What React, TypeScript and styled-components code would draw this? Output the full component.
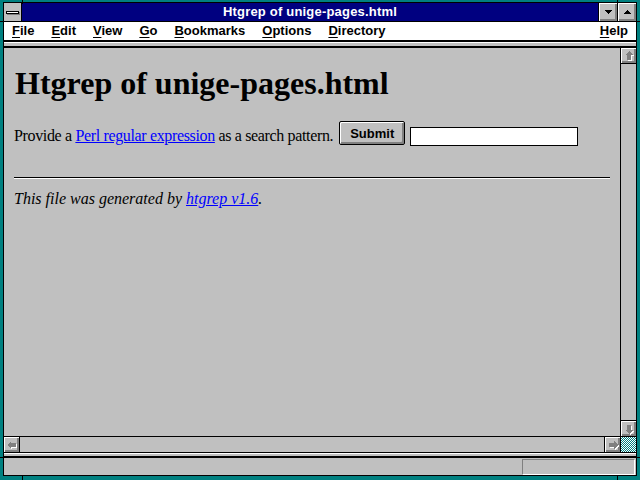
import React from "react";
import styled, { createGlobalStyle } from "styled-components";

const Global = createGlobalStyle`
  html, body { margin: 0; padding: 0; width: 640px; height: 480px; overflow: hidden; background: #008080; }
  #root { width: 640px; height: 480px; }
  * { box-sizing: border-box; }
`;

const Frame = styled.div`
  position: relative;
  width: 640px;
  height: 480px;
  background: #008080;
  padding: 2px 3px 4px 3px;
`;

const Tick = styled.div<{ $v?: boolean }>`
  position: absolute;
  background: #000;
  ${(p) => (p.$v ? "width: 1px; height: 4px;" : "width: 4px; height: 1px;")}
`;

const Inner = styled.div`
  width: 100%;
  height: 100%;
  border: 1px solid #000;
  background: #c0c0c0;
  display: flex;
  flex-direction: column;
`;

const TitleBar = styled.div`
  height: 19px;
  flex: none;
  display: flex;
  background: #000080;
  border-bottom: 1px solid #000;
`;

const SysBox = styled.div`
  width: 18px;
  flex: none;
  background: #c0c0c0;
  border-right: 1px solid #000;
  display: flex;
  align-items: center;
  justify-content: center;
`;

const SysBar = styled.div`
  width: 13px;
  height: 3px;
  background: #fff;
  border: 1px solid #000;
  box-shadow: 1px 1px 0 #808080;
  margin-right: 1px;
`;

const Title = styled.div`
  flex: 1;
  text-align: center;
  color: #fff;
  font: bold 13px/18px "Liberation Sans", Arial, sans-serif;
  letter-spacing: 0.2px;
`;

const TitleButton = styled.div`
  width: 19px;
  flex: none;
  border-left: 1px solid #000;
  background: #c0c0c0;
  box-shadow: inset 1px 1px #fff, inset -2px -2px #808080;
  display: flex;
  align-items: center;
  justify-content: center;
`;

const MenuBar = styled.div`
  height: 20px;
  flex: none;
  background: #fff;
  border-bottom: 2px solid #000;
  display: flex;
  align-items: center;
  padding: 0 8px;
  gap: 17px;
  font: bold 13px/18px "Liberation Sans", Arial, sans-serif;
  color: #000;
`;

const MenuItem = styled.span<{ $right?: boolean }>`
  white-space: nowrap;
  ${(p) => (p.$right ? "margin-left: auto;" : "")}
  u { text-decoration: underline; text-underline-offset: 2px; }
`;

const Band = styled.div<{ $h: number; $b: number }>`
  flex: none;
  height: ${(p) => p.$h}px;
  background: #c0c0c0;
  border-top: 1px solid #fff;
  border-bottom: ${(p) => p.$b}px solid #000;
`;

const Main = styled.div`
  flex: 1;
  min-height: 0;
  display: flex;
`;

const Content = styled.div`
  flex: 1;
  overflow: hidden;
  padding: 17px 10px 0 10px;
  font-family: "Liberation Serif", "Times New Roman", serif;
  font-size: 16px;
  color: #000;
`;

const Heading = styled.h1`
  margin: 0 0 0 1px;
  font: bold 32px/36px "Liberation Serif", "Times New Roman", serif;
  white-space: nowrap;
`;

const FormRow = styled.div`
  margin-top: 20px;
  display: flex;
  align-items: flex-start;
`;

const Text = styled.span`
  margin-top: 6px;
  line-height: 18px;
  white-space: pre;
  letter-spacing: -0.35px;
`;

const Link = styled.a`
  color: #0000ff;
  text-decoration: underline;
`;

const SubmitButton = styled.button`
  margin-left: 6px;
  width: 66px;
  height: 24px;
  padding: 0;
  border: 1px solid #000;
  border-radius: 2px;
  background: #c0c0c0;
  box-shadow: inset 1px 1px #fff, inset -2px -2px #808080;
  font: bold 13px "Liberation Sans", Arial, sans-serif;
  color: #000;
  display: flex;
  align-items: center;
  justify-content: center;
`;

const SearchInput = styled.input`
  margin-top: 6px;
  margin-left: 5px;
  width: 168px;
  height: 19px;
  border: 1px solid #000;
  background: #fff;
  padding: 0 2px;
  outline: none;
`;

const Rule = styled.div`
  margin-top: 31px;
  height: 2px;
  border-top: 1px solid #000;
  border-bottom: 1px solid #fff;
`;

const Footer = styled.p`
  margin: 11px 0 0 0;
  font-style: italic;
  line-height: 18px;
  white-space: nowrap;
`;

const VScroll = styled.div`
  width: 16px;
  flex: none;
  border-left: 1px solid #000;
  display: flex;
  flex-direction: column;
`;

const Track = styled.div`
  flex: 1;
  background: #c0c0c0;
`;

const ScrollButton = styled.div<{ $edge: "top" | "bottom" | "left" | "right" }>`
  width: 15px;
  height: 15px;
  flex: none;
  background: #c0c0c0;
  box-shadow: inset 1px 1px #fff, inset -2px -2px #808080;
  display: flex;
  align-items: center;
  justify-content: center;
  ${(p) => `border-${p.$edge}: 1px solid #000;`}
  ${(p) => (p.$edge === "top" || p.$edge === "bottom" ? "height: 16px;" : "width: 16px;")}
`;

const HScroll = styled.div`
  height: 17px;
  flex: none;
  display: flex;
  border-top: 1px solid #000;
  border-bottom: 1px solid #000;
`;

const Corner = styled.div`
  width: 16px;
  flex: none;
  border-left: 1px solid #000;
  background-color: #fff;
  background-image: repeating-conic-gradient(#008080 0 25%, #fff 0 50%);
  background-size: 2px 2px;
`;

const StatusBar = styled.div`
  flex: none;
  height: 17px;
  display: flex;
  justify-content: flex-end;
  padding: 1px 1px 0 0;
`;

const StatusBox = styled.div`
  width: 113px;
  height: 16px;
  border-top: 1px solid #808080;
  border-left: 1px solid #808080;
  border-bottom: 1px solid #fff;
  border-right: 1px solid #fff;
`;

const Arrow: React.FC<{ rot: number }> = ({ rot }) => {
  const pts = "7,2 11,6 9,6 9,11 5,11 5,6 3,6";
  return (
    <svg width="14" height="14" viewBox="0 0 14 14" shapeRendering="crispEdges">
      <g transform="translate(1,1)">
        <polygon points={pts} fill="#fff" transform={`rotate(${rot} 7 7)`} />
      </g>
      <polygon points={pts} fill="#808080" transform={`rotate(${rot} 7 7)`} />
    </svg>
  );
};

const Tri: React.FC<{ up?: boolean }> = ({ up }) => (
  <svg width="7" height="4" viewBox="0 0 7 4" shapeRendering="crispEdges">
    <polygon points={up ? "3.5,0 7,4 0,4" : "0,0 7,0 3.5,4"} fill="#000" />
  </svg>
);

export default function App() {
  return (
    <>
      <Global />
      <Frame>
        <Tick $v style={{ left: 22, top: 0 }} />
        <Tick $v style={{ left: 617, top: 0 }} />
        <Tick $v style={{ left: 22, bottom: 0 }} />
        <Tick $v style={{ left: 617, bottom: 0 }} />
        <Tick style={{ left: 0, top: 21 }} />
        <Tick style={{ right: 0, top: 21 }} />
        <Tick style={{ left: 0, top: 457 }} />
        <Tick style={{ right: 0, top: 457 }} />
        <Inner>
          <TitleBar>
            <SysBox>
              <SysBar />
            </SysBox>
            <Title>Htgrep of unige-pages.html</Title>
            <TitleButton>
              <Tri />
            </TitleButton>
            <TitleButton>
              <Tri up />
            </TitleButton>
          </TitleBar>
          <MenuBar>
            <MenuItem><u>F</u>ile</MenuItem>
            <MenuItem><u>E</u>dit</MenuItem>
            <MenuItem><u>V</u>iew</MenuItem>
            <MenuItem><u>G</u>o</MenuItem>
            <MenuItem><u>B</u>ookmarks</MenuItem>
            <MenuItem><u>O</u>ptions</MenuItem>
            <MenuItem><u>D</u>irectory</MenuItem>
            <MenuItem $right><u>H</u>elp</MenuItem>
          </MenuBar>
          <Band $h={6} $b={2} />
          <Main>
            <Content>
              <Heading>Htgrep of unige-pages.html</Heading>
              <FormRow>
                <Text>
                  Provide a <Link href="#">Perl regular expression</Link> as a search pattern.
                </Text>
                <SubmitButton>Submit</SubmitButton>
                <SearchInput type="text" />
              </FormRow>
              <Rule />
              <Footer>
                This file was generated by <Link href="#">htgrep v1.6</Link>.
              </Footer>
            </Content>
            <VScroll>
              <ScrollButton $edge="bottom">
                <Arrow rot={0} />
              </ScrollButton>
              <Track />
              <ScrollButton $edge="top">
                <Arrow rot={180} />
              </ScrollButton>
            </VScroll>
          </Main>
          <HScroll>
            <ScrollButton $edge="right">
              <Arrow rot={270} />
            </ScrollButton>
            <Track />
            <ScrollButton $edge="left">
              <Arrow rot={90} />
            </ScrollButton>
            <Corner />
          </HScroll>
          <Band $h={5} $b={2} />
          <StatusBar>
            <StatusBox />
          </StatusBar>
        </Inner>
      </Frame>
    </>
  );
}
